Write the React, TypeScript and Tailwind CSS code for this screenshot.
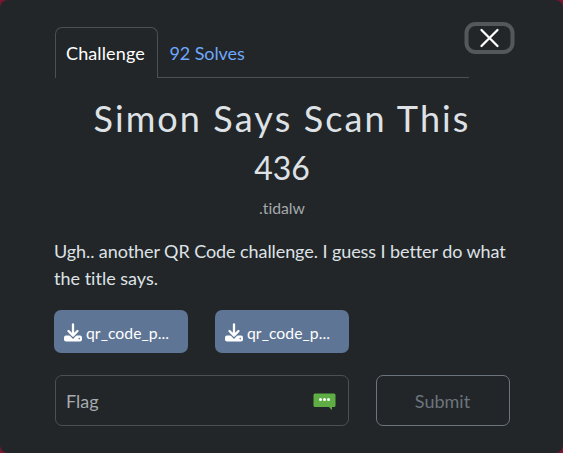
import React from "react";

function DownloadIcon() {
  return (
    <svg viewBox="0 0 18 19" className="h-[19px] w-[18px] shrink-0" fill="none">
      <rect x="0" y="12.6" width="18" height="5.9" rx="2" fill="#fff" />
      <path d="M3.8 7.2 9 12.7l5.2-5.500" stroke="#5e7595" strokeWidth="4.6" />
      <path d="M9 1.4v11M4.5 8l4.5 4.6L13.5 8" stroke="#fff" strokeWidth="2.3" strokeLinecap="round" strokeLinejoin="round" />
      <circle cx="15.2" cy="15.6" r="0.8" fill="#5e7595" />
    </svg>
  );
}

function FileButton() {
  return (
    <button className="flex h-[43px] w-[134px] items-center gap-[4px] rounded-[7px] bg-[#5e7595] pl-[10px] pt-px text-[15.75px] text-white">
      <DownloadIcon />
      <span className="pt-px tracking-[0.05px]">qr_code_p...</span>
    </button>
  );
}

export default function App() {
  return (
    <div className="h-[453px] w-[563px] overflow-hidden bg-[#7a1730] font-['Lato',sans-serif] text-[18px] leading-[27px] text-[#dee2e6] [font-variant-ligatures:none]">
      <div className="flex h-full flex-col rounded-[8px] bg-[#222628] pl-[54px] pr-[53px]">
        <div className="flex">
          <div className="ml-px mt-[27px] flex h-[51px] w-[415px]">
            <div className="flex w-[103px] items-center rounded-t-[7px] border border-b-0 border-[#4b5053] pb-px pl-[10px] pt-[2px] tracking-[0.12px] text-white">
              Challenge
            </div>
            <div className="flex flex-1 items-center border-b border-[#4b5053] pl-[11.5px] pt-[3px] tracking-[-0.1px] text-[#6ea8fe]">
              92 Solves
            </div>
          </div>
          <button
            aria-label="Close"
            className="-ml-[5px] -mr-[4px] mt-[22px] flex h-[32px] w-[50px] shrink-0 translate-x-[0.5px] items-center justify-center rounded-[11px] border-4 border-[#54585b]"
          >
            <svg viewBox="0 0 20 20" className="size-5" stroke="#fff" strokeWidth="2.3" strokeLinecap="round">
              <path d="M2 2l16 16M18 2L2 18" />
            </svg>
          </button>
        </div>
        <h2 className="mt-[19px] whitespace-nowrap text-center text-[36px] leading-[43px] tracking-[2.1px]">Simon Says Scan This</h2>
        <h3 className="mt-[9px] text-center text-[32px] leading-[38px]">436</h3>
        <div className="mt-[9px] text-center text-[15.75px] leading-[24px] text-[#a5a9ac]">.tidalw</div>
        <p className="mt-[18px] whitespace-nowrap tracking-[-0.075px]">
          Ugh.. another QR Code challenge. I guess I better do what
          <br />
          <span className="tracking-[0.01px]">the title says.</span>
        </p>
        <div className="mt-[18px] flex gap-[27px]">
          <FileButton />
          <FileButton />
        </div>
        <div className="ml-px mt-[22px] flex gap-[27px]">
          <div className="flex h-[51px] w-[294px] items-center justify-between rounded-[7px] border border-[#4b5053] pl-[10px] pr-[12px] text-[#a6abb0]">
            <span className="pt-[2px]">Flag</span>
            <svg viewBox="0 0 23 18" className="mt-[3px] h-[18px] w-[23px]">
              <path d="M2 .5h19A1.5 1.5 0 0 1 22.500 2v10.500a1.500 1.500 0 0 1-1.500 1.500h-2v3l-3-3H2a1.500 1.500 0 0 1-1.500-1.500V2A1.500 1.500 0 0 1 2 .5z" fill="#5fae45" />
              <g fill="#fff">
                <circle cx="7.5" cy="6.5" r="1.5" />
                <circle cx="11.5" cy="6.5" r="1.5" />
                <circle cx="15.5" cy="6.5" r="1.5" />
              </g>
            </svg>
          </div>
          <button className="h-[51px] w-[134px] rounded-[7px] border border-[#6c757d] pr-px pt-[2px] text-[#6c757d]">Submit</button>
        </div>
      </div>
    </div>
  );
}
